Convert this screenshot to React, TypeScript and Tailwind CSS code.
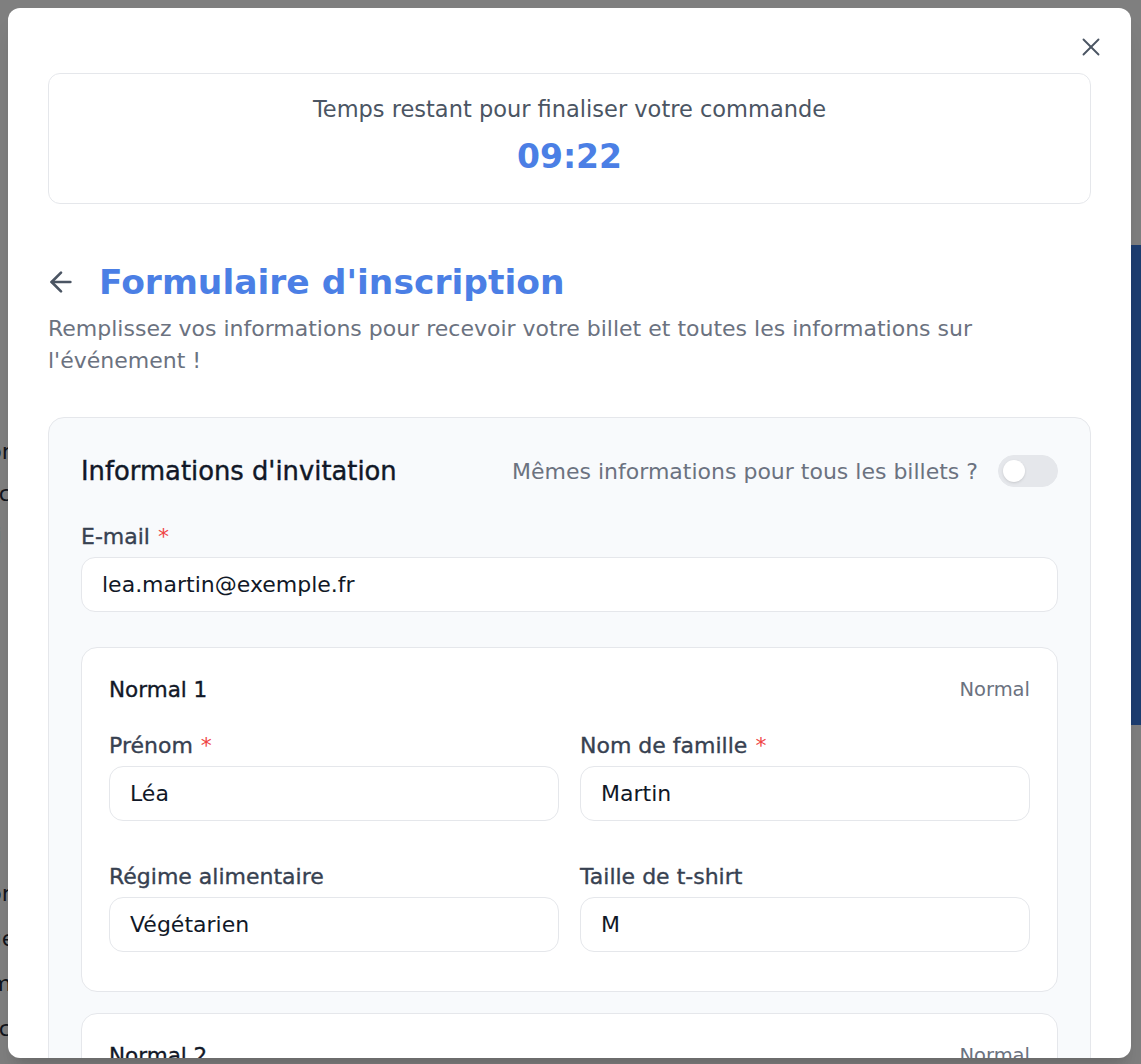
import { ArrowLeft, X } from 'lucide-react'

function Field({ label, value, required }: { label: string; value: string; required?: boolean }) {
    return (
        <div className="flex flex-col">
            <label className="text-[22px] leading-6 text-[#374151] mb-2 [-webkit-text-stroke:0.35px]">
                {label}
                {required && <span className="text-[#ef4444] ml-2 [-webkit-text-stroke:0px]">*</span>}
            </label>
            <div className="h-[55px] flex items-center px-5 bg-white border border-[#e5e7eb] rounded-[14px] text-[22px] text-[#111827]">
                {value}
            </div>
        </div>
    )
}

function TicketCard({ title, fields }: { title: string; fields: { label: string; value: string; required?: boolean }[] }) {
    return (
        <div className="bg-white border border-[#e5e7eb] rounded-2xl px-[27px] pt-[27px] pb-[39px]">
            <div className="flex items-center justify-between">
                <span className="text-[21.5px] leading-6 text-[#111827] [-webkit-text-stroke:0.35px]">{title}</span>
                <span className="text-[19.5px] text-[#6b7280]">Normal</span>
            </div>
            <div className="grid grid-cols-2 gap-x-[21px] gap-y-[44px] mt-[30px]">
                {fields.map((f) => (
                    <Field key={f.label} label={f.label} value={f.value} required={f.required} />
                ))}
            </div>
        </div>
    )
}

export default function App() {
    const ticketFields = [
        { label: 'Prénom', value: 'Léa', required: true },
        { label: 'Nom de famille', value: 'Martin', required: true },
        { label: 'Régime alimentaire', value: 'Végétarien' },
        { label: 'Taille de t-shirt', value: 'M' },
    ]

    return (
        <div className="relative h-[1064px] w-full overflow-hidden bg-white font-['DejaVu_Sans',sans-serif]">
            {/* page behind the dialog */}
            <div className="absolute inset-0 text-[#1f2937] text-[22px]">
                <div className="absolute left-[-40px] top-[440px] flex flex-col gap-[18px] leading-6">
                    <span>Infor</span>
                    <span>Accc</span>
                    <span>Acti</span>
                </div>
                <div className="absolute left-[-40px] top-[882px] flex flex-col gap-[21px] leading-6">
                    <span>Infor</span>
                    <span>Rege</span>
                    <span>Nom</span>
                    <span>Accc</span>
                </div>
                <div className="absolute right-0 top-[245px] h-[480px] w-[40px] bg-[#3b7ae0]" />
            </div>
            <div className="absolute inset-0 bg-black/50" />

            {/* dialog */}
            <div className="absolute left-2 top-2 right-[10px] h-[1050px] bg-white rounded-xl overflow-hidden shadow-xl">
                <button className="absolute top-[24px] right-[25px] text-[#4b5563]">
                    <X size={30} strokeWidth={1.5} />
                </button>

                <div className="px-10 pt-[65px]">
                    {/* Timer */}
                    <div className="border border-[#e5e7eb] rounded-xl pt-[21px] pb-[26px] text-center">
                        <p className="text-[22.5px] leading-7 text-[#4b5563]">Temps restant pour finaliser votre commande</p>
                        <p className="mt-[14px] text-[33px] leading-10 font-bold text-[#4b7fe5]">09:22</p>
                    </div>

                    {/* Header */}
                    <div className="flex items-center gap-[22px] mt-[58px] ml-[-3px]">
                        <ArrowLeft size={32} strokeWidth={2} className="text-[#4b5563]" />
                        <h1 className="text-[34.5px] leading-10 font-bold text-[#4b7fe5]">Formulaire d'inscription</h1>
                    </div>
                    <p className="mt-[11px] text-[22px] leading-8 text-[#6b7280]">
                        Remplissez vos informations pour recevoir votre billet et toutes les informations sur l'événement !
                    </p>

                    {/* Form */}
                    <div className="mt-10 bg-[#f8fafc] border border-[#e5e7eb] rounded-2xl px-[32px] pt-[37px] pb-10">
                        <div className="flex items-center justify-between h-8">
                            <h2 className="text-[25.8px] text-[#111827] [-webkit-text-stroke:0.4px]">Informations d'invitation</h2>
                            <div className="flex items-center gap-5">
                                <span className="text-[22px] text-[#6b7280]">Mêmes informations pour tous les billets ?</span>
                                <div className="w-[60px] h-8 rounded-full bg-[#e5e7eb] border border-[#e5e7eb] flex items-center px-[4px]">
                                    <div className="w-[22px] h-[22px] rounded-full bg-white shadow-sm" />
                                </div>
                            </div>
                        </div>

                        <div className="mt-[38px]">
                            <Field label="E-mail" value="lea.martin@exemple.fr" required />
                        </div>

                        <div className="mt-[35px] flex flex-col gap-[21px]">
                            <TicketCard title="Normal 1" fields={ticketFields} />
                            <TicketCard title="Normal 2" fields={ticketFields} />
                        </div>
                    </div>
                </div>
            </div>
        </div>
    )
}
